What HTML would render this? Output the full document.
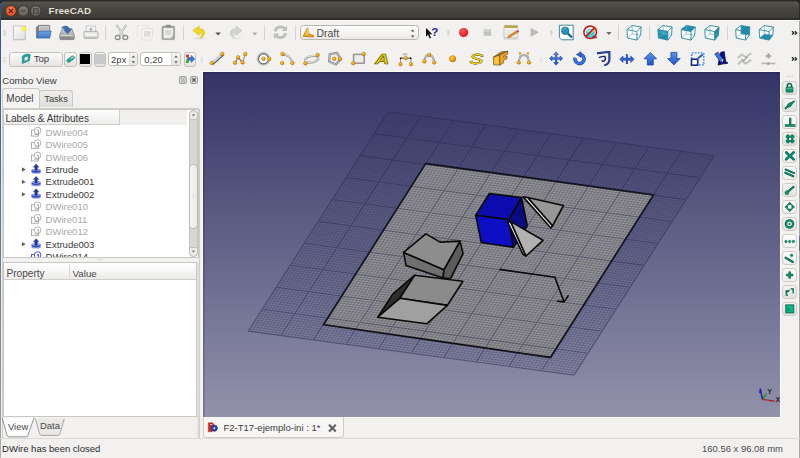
<!DOCTYPE html>
<html><head><meta charset="utf-8"><title>FreeCAD</title>
<style>
html,body{margin:0;padding:0;}
body{width:800px;height:458px;overflow:hidden;position:relative;background:#f2f1f0;font-family:"Liberation Sans",sans-serif;font-size:9.6px;color:#3c3c3c;}
.a{position:absolute;}
svg{position:absolute;overflow:visible;}
.t{position:absolute;white-space:nowrap;line-height:12px;}
.btn{position:absolute;border:1px solid #c2c0ba;border-radius:3px;background:linear-gradient(#fbfbfa,#e6e4e0);box-sizing:border-box;}
</style></head><body>

<!-- 3D view -->
<div class="a" style="left:202px;top:71px;width:579px;height:347px;background:#fbfbf9;"></div>
<div class="a" style="left:203px;top:72px;width:576.600px;height:345px;background:linear-gradient(#333366,#9292ab);overflow:hidden;box-shadow:inset 1.500px 1.500px 0 rgba(20,20,70,0.260);"></div>
<svg width="800" height="458" viewBox="0 0 800 458" style="left:0;top:0;">
<!-- gray base rect -->
<polygon points="425.7,163.6 653.5,194.9 550.5,357.5 323.6,324.6" fill="#949494" stroke="#0a0a0a" stroke-width="1.8" stroke-linejoin="miter"/>
<path d="M391.5 112.1L251.6 331.5M386.9 113.9L712.6 157.9M394.8 112.6L254.8 332.0M385.5 116.1L711.2 160.1M398.0 113.0L258.1 332.4M384.1 118.3L709.8 162.3M401.3 113.5L261.3 332.9M382.7 120.5L708.4 164.5M404.5 113.9L264.6 333.3M381.3 122.7L707.0 166.7M407.8 114.3L267.8 333.7M379.9 124.9L705.6 168.9M411.1 114.8L271.1 334.2M378.5 127.1L704.2 171.1M414.3 115.2L274.4 334.6M377.1 129.3L702.8 173.3M417.6 115.7L277.6 335.1M375.7 131.4L701.4 175.4M424.1 116.5L284.1 335.9M372.9 135.8L698.6 179.8M427.3 117.0L287.4 336.4M371.5 138.0L697.2 182.0M430.6 117.4L290.6 336.8M370.1 140.2L695.8 184.2M433.9 117.9L293.9 337.3M368.7 142.4L694.4 186.4M437.1 118.3L297.2 337.7M367.3 144.6L693.0 188.6M440.4 118.7L300.4 338.1M365.9 146.8L691.6 190.8M443.6 119.2L303.7 338.6M364.5 149.0L690.2 193.0M446.9 119.6L306.9 339.0M363.1 151.2L688.8 195.2M450.1 120.1L310.2 339.5M361.7 153.4L687.4 197.4M456.7 120.9L316.7 340.3M358.9 157.8L684.6 201.8M459.9 121.4L320.0 340.8M357.5 160.0L683.2 204.0M463.2 121.8L323.2 341.2M356.1 162.2L681.8 206.2M466.4 122.3L326.5 341.7M354.7 164.4L680.4 208.4M469.7 122.7L329.7 342.1M353.3 166.6L679.0 210.6M472.9 123.1L333.0 342.5M351.9 168.7L677.6 212.7M476.2 123.6L336.3 343.0M350.5 170.9L676.2 214.9M479.5 124.0L339.5 343.4M349.1 173.1L674.8 217.1M482.7 124.5L342.8 343.9M347.7 175.3L673.4 219.3M489.2 125.3L349.3 344.7M344.9 179.7L670.6 223.7M492.5 125.8L352.5 345.2M343.5 181.9L669.2 225.9M495.7 126.2L355.8 345.6M342.1 184.1L667.8 228.1M499.0 126.7L359.1 346.1M340.7 186.3L666.4 230.3M502.3 127.1L362.3 346.5M339.3 188.5L665.0 232.5M505.5 127.5L365.6 346.9M337.9 190.7L663.6 234.7M508.8 128.0L368.8 347.4M336.5 192.9L662.2 236.9M512.0 128.4L372.1 347.8M335.1 195.1L660.8 239.1M515.3 128.9L375.3 348.3M333.7 197.3L659.4 241.3M521.8 129.7L381.9 349.1M330.9 201.7L656.6 245.7M525.1 130.2L385.1 349.6M329.5 203.8L655.2 247.8M528.3 130.6L388.4 350.0M328.1 206.0L653.8 250.0M531.6 131.1L391.6 350.5M326.7 208.2L652.4 252.2M534.8 131.5L394.9 350.9M325.3 210.4L651.0 254.4M538.1 131.9L398.1 351.3M323.9 212.6L649.6 256.6M541.4 132.4L401.4 351.8M322.5 214.8L648.2 258.8M544.6 132.8L404.7 352.2M321.1 217.0L646.8 261.0M547.9 133.3L407.9 352.7M319.7 219.2L645.4 263.2M554.4 134.1L414.4 353.5M316.9 223.6L642.6 267.6M557.6 134.6L417.7 354.0M315.5 225.8L641.2 269.8M560.9 135.0L420.9 354.4M314.1 228.0L639.8 272.0M564.2 135.5L424.2 354.9M312.7 230.2L638.4 274.2M567.4 135.9L427.5 355.3M311.3 232.4L637.0 276.4M570.7 136.3L430.7 355.7M309.9 234.6L635.6 278.6M573.9 136.8L434.0 356.2M308.5 236.8L634.2 280.8M577.2 137.2L437.2 356.6M307.1 239.0L632.8 283.0M580.4 137.7L440.5 357.1M305.7 241.1L631.4 285.1M587.0 138.5L447.0 357.9M302.9 245.5L628.6 289.5M590.2 139.0L450.3 358.4M301.5 247.7L627.2 291.7M593.5 139.4L453.5 358.8M300.1 249.9L625.8 293.9M596.7 139.9L456.8 359.3M298.7 252.1L624.4 296.1M600.0 140.3L460.0 359.7M297.3 254.3L623.0 298.3M603.2 140.7L463.3 360.1M295.9 256.5L621.6 300.5M606.5 141.2L466.6 360.6M294.5 258.7L620.2 302.7M609.8 141.6L469.8 361.0M293.1 260.9L618.8 304.9M613.0 142.1L473.1 361.5M291.7 263.1L617.4 307.1M619.5 142.9L479.6 362.3M288.9 267.5L614.6 311.5M622.8 143.4L482.8 362.8M287.5 269.7L613.2 313.7M626.0 143.8L486.1 363.2M286.1 271.9L611.8 315.9M629.3 144.3L489.4 363.7M284.7 274.1L610.4 318.1M632.6 144.7L492.6 364.1M283.3 276.3L609.0 320.2M635.8 145.1L495.9 364.5M281.9 278.4L607.6 322.4M639.1 145.6L499.1 365.0M280.5 280.6L606.2 324.6M642.3 146.0L502.4 365.4M279.1 282.8L604.8 326.8M645.6 146.5L505.6 365.9M277.7 285.0L603.4 329.0M652.1 147.3L512.2 366.7M274.9 289.4L600.6 333.4M655.4 147.8L515.4 367.2M273.5 291.6L599.2 335.6M658.6 148.2L518.7 367.6M272.1 293.8L597.8 337.8M661.9 148.7L521.9 368.1M270.7 296.0L596.4 340.0M665.1 149.1L525.2 368.5M269.3 298.2L595.0 342.2M668.4 149.5L528.4 368.9M267.9 300.4L593.6 344.4M671.7 150.0L531.7 369.4M266.5 302.6L592.2 346.6M674.9 150.4L535.0 369.8M265.1 304.8L590.8 348.8M678.2 150.9L538.2 370.3M263.7 307.0L589.4 351.0M684.7 151.7L544.7 371.1M260.9 311.4L586.6 355.4M687.9 152.2L548.0 371.6M259.5 313.5L585.2 357.5M691.2 152.6L551.2 372.0M258.1 315.7L583.8 359.7M694.5 153.1L554.5 372.5M256.7 317.9L582.4 361.9M697.7 153.5L557.8 372.9M255.3 320.1L581.0 364.1M701.0 153.9L561.0 373.3M253.9 322.3L579.6 366.3M704.2 154.4L564.3 373.8M252.5 324.5L578.2 368.5M707.5 154.8L567.5 374.2M251.1 326.7L576.8 370.7M710.7 155.3L570.8 374.7M249.7 328.9L575.4 372.9" stroke="#34345a" stroke-opacity="0.34" stroke-width="0.8" fill="none"/>
<path d="M388.2 111.7L248.3 331.1M388.2 111.7L714.0 155.7M420.8 116.1L280.9 335.5M374.3 133.6L700.0 177.6M453.4 120.5L313.4 339.9M360.3 155.6L686.0 199.6M486.0 124.9L346.0 344.3M346.3 177.5L672.0 221.5M518.5 129.3L378.6 348.7M332.3 199.5L658.0 243.5M551.1 133.7L411.2 353.1M318.3 221.4L644.0 265.4M583.7 138.1L443.8 357.5M304.3 243.3L630.0 287.3M616.3 142.5L476.3 361.9M290.3 265.3L616.0 309.3M648.8 146.9L508.9 366.3M276.3 287.2L602.0 331.2M681.4 151.3L541.5 370.7M262.3 309.2L588.0 353.2M714.0 155.7L574.0 375.1M248.3 331.1L574.0 375.1" stroke="#26264e" stroke-opacity="0.5" stroke-width="1.1" fill="none"/>
<g stroke="#0a0a0a" stroke-width="1.6" stroke-linejoin="round">
<!-- cube -->
<polygon points="508.6,219.8 521.5,197.5 527.3,225.8 513.3,247.3" fill="#0a0a82"/>
<polygon points="489.3,193.6 521.5,197.5 508.6,219.8 475.7,215.3" fill="#0c0cae"/>
<polygon points="475.7,215.3 508.6,219.8 513.3,247.3 481.3,242.5" fill="#0e0ec4"/>
<!-- triangle 1 -->
<polygon points="523.2,196.9 527.8,197.5 552.6,225.8 550.8,228" fill="#e4e4e4"/>
<polygon points="527.8,197.5 563.4,205.5 552.6,225.8" fill="#979797"/>
<!-- triangle 2 -->
<polygon points="507.5,222 510.7,221.6 526,256 522.9,254.2" fill="#e4e4e4"/>
<polygon points="510.7,221.6 543,240.3 526,256" fill="#b2b2b2"/>
<!-- object 1 -->
<polygon points="403.6,252.4 443.9,269.7 443.2,278.1 406,265.6" fill="#6f6f6f"/>
<polygon points="460,241.1 463.1,253.6 450.4,278.8 443.2,278.1 443.9,269.7" fill="#5c5c5c"/>
<polygon points="403.6,252.4 425.9,233.9 440.1,242.1 460,241.1 443.9,269.7" fill="#8d8d8d"/>
<!-- object 2 -->
<polygon points="414.7,275.2 399.8,298.3 377.8,317.2 392.7,294.1" fill="#2e2e2e"/>
<polygon points="414.7,275.2 462.9,281.3 447.3,305.4 399.8,298.3" fill="#8b8b8b"/>
<polygon points="399.8,298.3 447.3,305.4 426.7,323.8 377.8,317.2" fill="#a0a0a0"/>
<!-- wire -->
<polyline points="499.4,269.4 554.9,277.3 564,301.9" fill="none"/>
<polyline points="556.8,301.1 564,301.9 568.6,295.3" fill="none"/>
</g>
</svg>

<!-- titlebar -->
<div class="a" style="left:0;top:0;width:800px;height:19.500px;background:linear-gradient(#2b2a27 0,#2b2a27 1px,#57554d 2px,#4a4942 7px,#3d3c37 17.500px,#2f2e2b 18.500px,#2f2e2b 19.500px);"></div>
<div class="a" style="left:799px;top:0;width:1px;height:19.500px;background:#2a2927;"></div>
<div class="a" style="left:797px;top:0;width:3px;height:2.500px;background:#262523;border-radius:0 0 0 3px;"></div>
<div class="a" style="left:0;top:19.500px;width:800px;height:1.500px;background:#fdfdfc;"></div>
<div class="a" style="left:0;top:1px;width:1px;height:457px;background:linear-gradient(#2e5590 0,#355c90 60px,#4a6d92 150px,#6d8298 290px,#9a9a9a 420px,#b4b4b4 457px);"></div>
<div class="a" style="left:0;top:0;width:2px;height:3px;background:#1b2747;"></div>
<svg width="60" height="20" viewBox="0 0 60 20" style="left:0;top:0;">
<defs>
<radialGradient id="cg" cx="0.5" cy="0.3" r="0.7"><stop offset="0" stop-color="#f7744a"/><stop offset="1" stop-color="#e8501f"/></radialGradient>
<linearGradient id="mg" x1="0" y1="0" x2="0" y2="1"><stop offset="0" stop-color="#7d7b73"/><stop offset="1" stop-color="#66645d"/></linearGradient>
</defs>
<circle cx="10.9" cy="10.9" r="5.4" fill="url(#cg)" stroke="#33302a" stroke-width="0.9"/>
<path d="M8.8 8.8l4.2 4.2M13 8.8l-4.2 4.2" stroke="#5e2410" stroke-width="1.2" fill="none"/>
<circle cx="23.3" cy="10.9" r="5.3" fill="url(#mg)" stroke="#33312d" stroke-width="0.9"/>
<path d="M20.9 10.9h4.8" stroke="#45433e" stroke-width="1.2"/>
<circle cx="35.8" cy="10.9" r="5.3" fill="url(#mg)" stroke="#33312d" stroke-width="0.9"/>
<rect x="33.6" y="8.7" width="4.4" height="4.4" fill="none" stroke="#45433e" stroke-width="1.1"/>
</svg>
<div class="t" style="left:48.600px;top:5.300px;font-weight:bold;font-size:9.900px;color:#e6e2d9;letter-spacing:0.050px;text-shadow:0 -0.5px 0 #222;">FreeCAD</div>

<div class="a" style="left:798px;top:21px;width:2px;height:437px;background:linear-gradient(90deg,#f7f7f6 0,#f7f7f6 1.250px,#a6a6a6 1.400px,#a6a6a6 2px);"></div>

<!-- toolbar1 -->
<div class="a" style="left:299.5px;top:25px;width:119px;height:15px;border:1px solid #b9b7b1;border-radius:3.5px;background:linear-gradient(#ffffff,#f3f2f0 60%,#e9e8e5);box-sizing:border-box;"></div>
<div class="t" style="left:316.5px;top:27.50px;font-size:10.4px;color:#4c4c4c;">Draft</div>
<svg width="800" height="50" viewBox="0 0 800 50" style="left:0;top:0;">
<defs>
<linearGradient id="pg" x1="0" y1="0" x2="1" y2="1"><stop offset="0" stop-color="#ffffff"/><stop offset="1" stop-color="#dedede"/></linearGradient>
<linearGradient id="fb" x1="0" y1="0" x2="0" y2="1"><stop offset="0" stop-color="#6fa3e0"/><stop offset="1" stop-color="#3d78c4"/></linearGradient>
<linearGradient id="dg" x1="0" y1="0" x2="0" y2="1"><stop offset="0" stop-color="#d4d4d4"/><stop offset="1" stop-color="#8c8c8c"/></linearGradient>
<radialGradient id="rg" cx="0.4" cy="0.35" r="0.7"><stop offset="0" stop-color="#ff5a5a"/><stop offset="1" stop-color="#dc1414"/></radialGradient>
<radialGradient id="yg" cx="0.5" cy="0.5" r="0.5"><stop offset="0" stop-color="#ffffa0"/><stop offset="0.6" stop-color="#f4ee30"/><stop offset="1" stop-color="#f0e840" stop-opacity="0.6"/></radialGradient>
<path id="hull" d="M0.400 4.500L5.600 0.400L14.600 1.900L14 10.100L10.300 15L0.900 12.900Z" fill="#fcfdfd"/>
<g id="cube" fill="none" stroke="#2a86a2" stroke-width="0.9" stroke-linejoin="round">
<path d="M5.6 8.8L0.9 12.9M5.6 8.8V0.4M5.6 8.8L14 10.1" stroke="#6fb3c6" stroke-width="0.7"/>
<path d="M0.4 4.5L10.3 6.4V15L0.9 12.9ZM0.4 4.5L5.6 0.4L14.6 1.9L10.3 6.4M14.6 1.9L14 10.1L10.3 15"/>
</g>
</defs>
<!-- handles -->
<g fill="#d9d7d3"><rect x="3.5" y="30" width="2.2" height="6"/><rect x="447.3" y="30" width="2.4" height="5.4"/><rect x="550" y="30" width="2.4" height="5.4"/></g>
<!-- separators -->
<g stroke="#d6d4d0" stroke-width="1"><path d="M105.5 25v15M183.5 25v15M264.5 25v15M295.5 25v15M618.5 25v15M649.5 25v15M727.5 25v15"/></g>
<!-- new -->
<rect x="13.6" y="26" width="11.6" height="13.4" fill="url(#pg)" stroke="#b4b4b2" stroke-width="0.8"/>
<path d="M13.4 39.9h12.2" stroke="#c8c8c6" stroke-width="0.8"/>
<circle cx="24" cy="28.7" r="2.7" fill="url(#yg)"/>
<!-- open -->
<path d="M36.200 27.600l2.200-2.300h11.400v6.200l-11.400 6.300h-2z" fill="#7e7e7c" stroke="#6a6a68" stroke-width="0.500" stroke-linejoin="round"/>
<path d="M39 26.100h10.200v5.600h-10.200z" fill="#d4d4d2"/>
<path d="M40 27.200h8.600v4.500h-8.600z" fill="#bcbcba"/>
<path d="M38.400 31.300l12.700-0.300l-1.400 7.100h-12.800z" fill="url(#fb)" stroke="#2f66ae" stroke-width="0.700" stroke-linejoin="round"/>
<!-- save -->
<path d="M59.8 35.2l2.6-6.6h9.4l2.4 6.6v3.6q0 0.8-0.8 0.8H60.600q-0.800 0-0.800-0.800z" fill="url(#dg)" stroke="#7c7c7a" stroke-width="0.8" stroke-linejoin="round"/>
<path d="M60.4 35.4h13.200" stroke="#e8e8e8" stroke-width="0.8"/>
<path d="M61.5 38h9" stroke="#6e6e6e" stroke-width="0.7"/>
<path d="M61.6 27.600q3.600-3 6.600-0.600q1 1 1.200 2.400h2l-4 4.400l-3.600-4.400h2q-0.600-2.600-4.200-1.800z" fill="#3a6fb8" stroke="#2a5596" stroke-width="0.6" stroke-linejoin="round"/>
<!-- print -->
<path d="M86.200 26h9.400v5.800h-9.400z" fill="#f4f4f4" stroke="#b8b8b6" stroke-width="0.7"/>
<path d="M90.900 27.400l2 2h-1.300v1.600h-1.400v-1.600h-1.300z" fill="#a6a6a4"/>
<path d="M83.800 32.400q0-1 1-1h12.200q1 0 1 1v5q0 1-1 1H84.800q-1 0-1-1z" fill="#e2e2e0" stroke="#a8a8a6" stroke-width="0.8"/>
<path d="M85 34.600h11.800" stroke="#fafafa" stroke-width="1.4"/>
<path d="M84.400 37.400h13" stroke="#b4b4b2" stroke-width="0.8"/>
<!-- cut -->
<g fill="none" stroke-linecap="round">
<path d="M117 25.600l6.800 10.400M125.800 25.600l-6.800 10.400" stroke-width="2.200" stroke="#b2b2b0"/>
<path d="M117 25.600l6.800 10.400M125.800 25.600l-6.800 10.400" stroke-width="1.200" stroke="#dcdcda"/>
<ellipse cx="117.700" cy="37.500" rx="2.400" ry="2.100" stroke-width="1.300" stroke="#8c8c8a"/>
<ellipse cx="125.300" cy="37.500" rx="2.400" ry="2.100" stroke-width="1.300" stroke="#8c8c8a"/>
</g>
<!-- copy (disabled) -->
<g opacity="0.55">
<rect x="137.600" y="25.400" width="10.200" height="11.600" fill="#f4f4f3" stroke="#d4d4d2" stroke-width="0.7"/>
<path d="M142 28.800h10.400v8.400l-2.800 2.800h-7.600z" fill="#fafaf9" stroke="#c8c8c6" stroke-width="0.7"/>
<rect x="144" y="31" width="6.400" height="5.600" fill="#d0d0ce"/>
</g>
<!-- paste -->
<rect x="162" y="26.200" width="12.600" height="13.400" rx="0.800" fill="#a4a4a2" stroke="#929290" stroke-width="0.600"/>
<rect x="165.600" y="24.800" width="5.400" height="2.600" rx="1" fill="#8e8e8c"/>
<path d="M163.500 28h9.600v8l-2.200 2.200h-7.400z" fill="#ededeb"/>
<path d="M173.100 36l-2.200 2.200v-2.200z" fill="#c4c4c2"/>
<rect x="165.400" y="30" width="5.800" height="5" fill="#d8d8d6"/>
<!-- undo -->
<ellipse cx="199.500" cy="38.300" rx="5" ry="0.900" fill="#c8c6c0" opacity="0.6"/>
<path d="M192.900 30.400l6.300-4.600v2.900q5.400 0.200 5.600 4.400q0 3.400-4.600 4.800q2.200-2 1.600-3.700q-0.600-1.400-2.600-1.400v2.700z" fill="#f2d624" stroke="#d8b810" stroke-width="0.6" stroke-linejoin="round"/>
<path d="M215.400 32.400h5.400l-2.700 3z" fill="#4e4e4c"/>
<!-- redo (disabled) -->
<g opacity="0.5">
<ellipse cx="236.500" cy="38.300" rx="5" ry="0.900" fill="#c8c6c0" opacity="0.6"/>
<path d="M242.100 30.400l-6.300-4.600v2.900q-5.400 0.200-5.600 4.400q0 3.400 4.600 4.800q-2.200-2-1.600-3.700q0.600-1.400 2.600-1.400v2.700z" fill="#b4b4b2" stroke="#a0a09e" stroke-width="0.6" stroke-linejoin="round"/>
<path d="M252.200 32.400h5.200l-2.600 3z" fill="#6e6e6c"/>
</g>
<!-- refresh (disabled) -->
<g fill="none" stroke="#bdbdbb" stroke-width="2.800">
<path d="M275.200 31.400q0.600-4.400 5.200-4.600q2.600 0 4.200 1.800"/>
<path d="M285.600 33q-0.600 4.400-5.200 4.600q-2.600 0-4.200-1.800"/>
</g>
<path d="M287 25.400v5.600h-5.600zM273.800 39v-5.600h5.600z" fill="#bdbdbb"/>
<!-- draft icon -->
<path d="M305.600 28.600h7.800v8.600h-7.800z" fill="#fbfbfb" stroke="#d4d4d2" stroke-width="0.5"/>
<path d="M303 36.400l4.600-8.600l1.500 6l4.400 1.600l0.200 1.600z" fill="#e8a417" stroke="#a96a06" stroke-width="0.6" stroke-linejoin="round"/>
<path d="M307.600 27.800l1.500 6l-4 1.800z" fill="#f7cc4a"/>
<!-- combo arrows -->
<path d="M410.700 31.600l1.900-2.200l1.900 2.200zM410.700 35.400l1.900 2.200l1.900-2.200z" fill="#4a4a48"/>
<!-- whats this -->
<path d="M426 27.900v8.800l2.100-1.900l1.500 3.600l1.400-0.600l-1.500-3.500h2.800z" fill="#0a0a0a"/>
<text x="431.300" y="36.200" font-family="Liberation Sans, sans-serif" font-weight="bold" font-size="11.500" fill="#1c1c9c">?</text>
<!-- record -->
<circle cx="463.600" cy="32.500" r="4.600" fill="url(#rg)"/>
<!-- stop -->
<rect x="483.800" y="29" width="7.300" height="6.800" fill="#c2c2c0"/>
<rect x="483.800" y="29" width="7.300" height="2.600" fill="#d2d2d0"/>
<!-- macro edit -->
<rect x="504" y="25.400" width="13.800" height="13.600" rx="1" fill="#f2f2f0" stroke="#b6b6b2" stroke-width="0.7"/>
<rect x="504.300" y="25.500" width="13.200" height="2.400" fill="#b3a548"/>
<path d="M506 30.800h9.800M506 33h5M506 35.200h3.600" stroke="#cfcfcd" stroke-width="0.7"/>
<path d="M504 37.700h13.800" stroke="#c6c6c2" stroke-width="1"/>
<path d="M508.600 35.800l8.200-5l1 1.600l-8.200 5l-2 0.300z" fill="#e8902a" stroke="#a85e10" stroke-width="0.500"/>
<path d="M516.800 30.800l1.200-0.700l1 1.600l-1.200 0.700z" fill="#d42020"/>
<!-- play -->
<path d="M530.600 27.800l8.400 4.500l-8.400 4.500z" fill="#b9b9b7"/>
<!-- zoom fit -->
<path d="M559.400 25.200h13.800v14.600h-11.600l-2.200-2.200z" fill="#fdfdfd" stroke="#2f7a94" stroke-width="0.9" stroke-linejoin="round"/>
<path d="M568.200 33.800l3.200 3" stroke="#1d6f8c" stroke-width="2.400" stroke-linecap="round"/>
<circle cx="565.200" cy="30.800" r="3.700" fill="#2697ba" stroke="#176a86" stroke-width="0.800"/>
<path d="M563 29.600q1-1.800 3-1.600" stroke="#7fd0e6" stroke-width="0.800" fill="none"/>
<!-- no draw -->
<path d="M586.600 31q0-1.400 3.800-1.400q3.800 0 3.800 1.400v5q0 1.400-3.800 1.400q-3.800 0-3.800-1.400z" fill="#3fd0da" stroke="#1a9aa6" stroke-width="0.500"/>
<ellipse cx="590.400" cy="31" rx="3.800" ry="1.300" fill="#8ceef2"/>
<path d="M589.600 32.600l6-5.400l1 1l-6 5.400z" fill="#f2d24a" stroke="#b0902a" stroke-width="0.300"/>
<ellipse cx="594.600" cy="37.300" rx="2.600" ry="1.200" fill="#5a1010" opacity="0.700"/>
<circle cx="590.200" cy="32.300" r="6.300" fill="none" stroke="#c81414" stroke-width="1.500"/>
<path d="M585.800 36.800l8.800-9" stroke="#c81414" stroke-width="1.600"/>
<path d="M606.200 32h5.400l-2.700 3z" fill="#6a6a68"/>
<!-- cubes -->
<use href="#hull" x="626.600" y="25.100"/><use href="#cube" x="626.600" y="25.100"/>
<g transform="translate(657.500 25.100)"><use href="#hull"/><path d="M0.400 4.500L10.300 6.400V15L0.900 12.900Z" fill="#1f8cab"/><path d="M0.400 4.500L10.300 6.400V10L0.600 8z" fill="#3aa6c2" opacity="0.6"/><use href="#cube"/></g>
<g transform="translate(680.700 25.100)"><use href="#hull"/><path d="M0.400 4.500L5.600 0.400L14.600 1.900L10.300 6.400Z" fill="#1f8cab"/><use href="#cube"/></g>
<g transform="translate(704.400 25.100)"><use href="#hull"/><path d="M10.300 6.400L14.600 1.900L14 10.100L10.300 15Z" fill="#1f8cab"/><use href="#cube"/></g>
<g transform="translate(735.300 25.100)"><use href="#hull"/><path d="M5.600 0.400L14.600 1.900L14 10.100L5.600 8.800Z" fill="#1f8cab"/><use href="#cube"/></g>
<g transform="translate(758.800 25.100)"><use href="#hull"/><path d="M0.900 12.900L5.600 8.800L14 10.100L10.300 15Z" fill="#1f8cab"/><use href="#cube"/></g>
<!-- chevrons -->
<path d="M792 31.200l1.800 1.700l-1.800 1.700M794.800 31.200l1.800 1.700l-1.800 1.700" fill="none" stroke="#1e1e1c" stroke-width="1.300"/>
</svg>

<!-- toolbar2 -->
<div class="btn" style="left:9px;top:51.5px;width:53.5px;height:15px;"></div>
<div class="btn" style="left:64.300px;top:51.5px;width:12.800px;height:15px;"></div>
<div class="btn" style="left:78.700px;top:51.5px;width:13.200px;height:15px;"></div>
<div class="btn" style="left:93.500px;top:51.5px;width:12.600px;height:15px;"></div>
<div class="btn" style="left:183.600px;top:51.5px;width:12.200px;height:15px;"></div>
<div class="a" style="left:80.200px;top:54px;width:10.200px;height:10px;background:#000;"></div>
<div class="a" style="left:95px;top:54px;width:9.600px;height:10px;background:#c9c9c8;"></div>
<!-- spin boxes -->
<div class="a" style="left:108px;top:52px;width:30.400px;height:14px;border:1px solid #c2c0ba;border-radius:3px;background:#fff;box-sizing:border-box;overflow:hidden;"><div class="a" style="left:20px;top:0;width:10px;height:14px;background:linear-gradient(#f6f5f3,#e4e2de);border-left:1px solid #dcdad6;"></div></div>
<div class="a" style="left:140.300px;top:52px;width:41px;height:14px;border:1px solid #c2c0ba;border-radius:3px;background:#fff;box-sizing:border-box;overflow:hidden;"><div class="a" style="left:30px;top:0;width:11px;height:14px;background:linear-gradient(#f6f5f3,#e4e2de);border-left:1px solid #dcdad6;"></div></div>
<div class="t" style="left:33.800px;top:53.300px;font-size:9.600px;letter-spacing:-0.100px;color:#3c3c3c;">Top</div>
<div class="t" style="left:111px;top:53.900px;font-size:9.300px;letter-spacing:0.200px;color:#3c3c3c;">2px</div>
<div class="t" style="left:144.200px;top:53.900px;font-size:9.300px;letter-spacing:0.150px;color:#3c3c3c;">0,20</div>
<svg width="800" height="30" viewBox="0 46 800 30" style="left:0;top:46px;">
<defs>
<radialGradient id="og" cx="0.4" cy="0.35" r="0.65"><stop offset="0" stop-color="#ffd060"/><stop offset="0.5" stop-color="#f5a80c"/><stop offset="1" stop-color="#c87a00"/></radialGradient>
<linearGradient id="bl" x1="0" y1="0" x2="0" y2="1"><stop offset="0" stop-color="#5a98f4"/><stop offset="1" stop-color="#1c54c8"/></linearGradient>
<linearGradient id="gy" x1="0" y1="0" x2="1" y2="1"><stop offset="0" stop-color="#d8d8d8"/><stop offset="1" stop-color="#9a9a9a"/></linearGradient>
<g id="dot"><circle r="1.850" fill="url(#og)" stroke="#a86400" stroke-width="0.350"/></g>
</defs>
<!-- handles -->
<g stroke="#d6d4d0" stroke-width="0.7"><path d="M3 57.500h3M3 59h3M3 60.500h3M3 62h3M200.500 57.500h2.400M200.500 59h2.400M200.500 60.500h2.400M200.500 62h2.400M539.800 57.500h2.400M539.800 59h2.400M539.800 60.500h2.400M539.800 62h2.400"/></g>
<!-- top view icon -->
<path d="M22.300 56l3.800-2l4.200 0.600l-0.800 6l-7.200 3zM24.200 57.300l0 4.100l3.900-1.700l0.100-3.700z" fill="#1fa3ab" fill-rule="evenodd" stroke="#16747c" stroke-width="0.500" stroke-linejoin="round"/>
<path d="M27.900 62.200l1.400 1.300" stroke="#5a8a90" stroke-width="0.600"/>
<!-- link icon -->
<path d="M67.400 59.600l4-3.200q1.600-1 2.800 0q1 1.200-0.200 2.400l-4 3q-1.600 1-2.800 0q-1-1.200 0.200-2.200z" fill="#2aa492" stroke="#127866" stroke-width="0.600"/>
<path d="M70.600 58.600l3.400-2" stroke="#d8f4ee" stroke-width="0.900"/>
<!-- spin arrows -->
<path d="M131.600 57.400l1.800-2l1.800 2zM131.600 61.200l1.800 2l1.800-2zM174.200 57.400l1.800-2l1.800 2zM174.200 61.200l1.800 2l1.800-2z" fill="#5a5a58"/>
<!-- apply icon -->
<rect x="185.900" y="54.600" width="3" height="2.800" fill="#e02a1a"/><rect x="185.900" y="57.400" width="3" height="2.800" fill="#f0d020"/><rect x="185.900" y="60.200" width="3" height="2.800" fill="#34b434"/>
<path d="M187.600 57.600h3.600v-2.200l3.600 3.500l-3.600 3.500v-2.200h-3.600z" fill="#3a78e0" stroke="#1a3c98" stroke-width="0.500"/>
<!-- line -->
<path d="M213.400 64l10-9.100" stroke="#5c5c5c" stroke-width="1.300" stroke-linecap="round"/><path d="M211.900 62.900l10.300-9.200" stroke="#d2d2d2" stroke-width="2.300" stroke-linecap="round"/>
<use href="#dot" x="211.800" y="63"/><use href="#dot" x="222.300" y="53.900"/>
<!-- wire -->
<path d="M235.100 62.700l3-5.400l4.400 5.100l2.800-8.500" fill="none" stroke="#6c6c6c" stroke-width="1.100" stroke-linejoin="round"/>
<path d="M234.700 62.400l3-5.400M242.100 62.100l2.800-8.500" fill="none" stroke="#d8d8d8" stroke-width="0.800"/>
<use href="#dot" x="235.100" y="62.700"/><use href="#dot" x="238.100" y="57.300"/><use href="#dot" x="242.500" y="62.400"/><use href="#dot" x="245.300" y="53.900"/>
<!-- circle -->
<circle cx="263.500" cy="58.800" r="6" fill="none" stroke="#c6c6c6" stroke-width="1.900"/><circle cx="263.500" cy="58.900" r="5" fill="#fafafa" stroke="#6c6c6c" stroke-width="1.100"/>
<use href="#dot" x="263.500" y="58.700"/><use href="#dot" x="269.300" y="58.800"/>
<!-- arc -->
<path d="M283 55q7.600 1 9 8" fill="none" stroke="#6a6a6a" stroke-width="1.200"/><path d="M282.400 53.900q8.400 0.600 10.200 9.100" fill="none" stroke="#cccccc" stroke-width="2.300"/>
<use href="#dot" x="282.400" y="53.900"/><use href="#dot" x="282.200" y="63"/><use href="#dot" x="292.400" y="63"/>
<!-- ellipse -->
<ellipse cx="311.700" cy="59.200" rx="6.800" ry="3.200" transform="rotate(-11 311.700 59.200)" fill="none" stroke="#a2a2a2" stroke-width="2.200"/><ellipse cx="311.700" cy="58.900" rx="6.800" ry="3.200" transform="rotate(-11 311.700 58.900)" fill="none" stroke="#e4e4e4" stroke-width="1.100"/>
<use href="#dot" x="305.400" y="63.300"/><use href="#dot" x="317.600" y="54.900"/>
<!-- polygon -->
<path d="M329.800 54.200l7.200-1.300l3.800 6.200l-4.900 5.400l-6.800-3z" fill="#f0f0f0" stroke="#8c8c8c" stroke-width="2.300" stroke-linejoin="round"/>
<path d="M329.800 54.200l7.200-1.300l3.800 6.200l-4.900 5.400l-6.800-3z" fill="none" stroke="#c4c4c4" stroke-width="0.900" stroke-linejoin="round"/>
<use href="#dot" x="334.200" y="58.700"/><use href="#dot" x="339.900" y="58.900"/>
<!-- rectangle -->
<rect x="353.600" y="54.400" width="10.600" height="8.800" fill="#ececec" stroke="#9a9a9a" stroke-width="1.600"/>
<use href="#dot" x="353.200" y="63.200"/><use href="#dot" x="363.700" y="53.900"/>
<!-- text A -->
<text x="375" y="64.400" font-family="Liberation Sans, sans-serif" font-weight="bold" font-style="italic" font-size="15.500" fill="#f4dc08" stroke="#6a5c00" stroke-width="0.700" textLength="14.200" lengthAdjust="spacingAndGlyphs">A</text>
<!-- dimension -->
<path d="M400.500 58v6M411 58v6" stroke="#555" stroke-width="0.600"/>
<path d="M400.500 58.200h10.500" stroke="#333" stroke-width="0.800"/>
<path d="M399.600 58.200l1.800-1.200v2.400zM411.900 58.200l-1.800-1.200v2.400z" fill="#111"/>
<path d="M402.600 55.400l0.800-2l0.800 2l0.800-2.400l0.800 2.400l0.800-2l0.800 2" fill="none" stroke="#9a9a9a" stroke-width="0.500"/>
<use href="#dot" x="400.500" y="64.100"/><use href="#dot" x="411" y="64.100"/><use href="#dot" x="405.500" y="58.100"/>
<!-- bspline -->
<path d="M424.300 61.400q0.800-6.500 4.800-6.500q4 0 5.100 7.600" fill="none" stroke="#9a9a9a" stroke-width="2.200"/><path d="M424.300 61.200q0.800-6.500 4.800-6.500q4 0 5.100 7.600" fill="none" stroke="#d0d0d0" stroke-width="0.900"/>
<use href="#dot" x="424.300" y="61.400"/><use href="#dot" x="429.100" y="54.900"/><use href="#dot" x="434.200" y="62.500"/>
<!-- point -->
<circle cx="452.600" cy="58.800" r="3.300" fill="url(#og)" stroke="#b06c00" stroke-width="0.300"/>
<!-- shapestring S -->
<text x="469.400" y="64.300" font-family="Liberation Sans, sans-serif" font-style="italic" font-size="15" fill="#f0d808" stroke="#4c4200" stroke-width="0.800" paint-order="stroke" textLength="13.600" lengthAdjust="spacingAndGlyphs">S</text>
<!-- facebinder -->
<g stroke="#4e4220" stroke-width="0.600" stroke-linejoin="round">
<path d="M493.300 57.200l8.200-5.500l6.200-0.400l-7.800 3.600z" fill="#c88c10"/>
<path d="M493.300 57.200l6.600-2.300v10.200l-6.300-0.300z" fill="#fdbe3a"/>
<path d="M499.900 54.900l7.800-3.600v2.800l-4.100 1.800v1.400l3.400-1.400v2.800l-3.400 1.400v2.700l-3.700 2.300z" fill="#f8a818"/>
</g>
<!-- bezier -->
<path d="M518.700 62.500l1.300-9.300M529 62.500l-1.100-9.300" stroke="#9c9c9c" stroke-width="0.500"/>
<path d="M518.700 62.500c1-10 9.300-10 10.300 0" fill="none" stroke="#9a9a9a" stroke-width="2"/><path d="M518.700 62.300c1-10 9.300-10 10.300 0" fill="none" stroke="#cfcfcf" stroke-width="0.800"/>
<circle cx="520" cy="53.200" r="1.200" fill="#f0a010"/><circle cx="527.900" cy="53.200" r="1.200" fill="#f0a010"/>
<use href="#dot" x="518.700" y="62.500"/><use href="#dot" x="529" y="62.500"/>
<!-- move -->
<path d="M556.10 51.80L558.50 54.50L556.95 54.50L556.95 57.65L560.10 57.65L560.10 56.10L562.80 58.50L560.10 60.90L560.10 59.35L556.95 59.35L556.95 62.50L558.50 62.50L556.10 65.20L553.70 62.50L555.25 62.50L555.25 59.35L552.10 59.35L552.10 60.90L549.40 58.50L552.10 56.10L552.10 57.65L555.25 57.65L555.25 54.50L553.70 54.50Z" fill="url(#bl)" stroke="#1a3a8c" stroke-width="0.550" stroke-linejoin="round"/>
<!-- rotate -->
<path d="M579.800 54.400a4.600 4.600 0 1 1 -4.700 3.400" fill="none" stroke="#163a94" stroke-width="3.400"/>
<path d="M579.800 54.400a4.600 4.600 0 1 1 -4.700 3.400" fill="none" stroke="#3674e4" stroke-width="2.200"/>
<path d="M576.400 54.600l4.600-3v5.800z" fill="#2c64d8" stroke="#163a94" stroke-width="0.500"/>
<!-- offset -->
<path d="M597 53.400q6-1.200 12.400-1.400v8q-0.400 4-5 5.200" fill="none" stroke="#14247c" stroke-width="2.100" stroke-linejoin="round"/>
<path d="M597 53.400q6-1.200 12.400-1.400v8q-0.400 4-5 5.200" fill="none" stroke="#3858c0" stroke-width="0.800" stroke-linejoin="round"/>
<path d="M598.800 57.600q3.500-1.400 6-1.200q1.600 2.400-0.400 4.400q-2 1.200-2.600-0.600" fill="none" stroke="#14247c" stroke-width="1.500"/>
<!-- trimex -->
<path d="M619.600 59.200l3.400-3.300v2.200h2.800v2.200h-2.800v2.200zM634.200 59.200l-3.400-3.300v2.200h-2.800v2.200h2.800v2.200z" fill="#2c64d8" stroke="#163a94" stroke-width="0.500" stroke-linejoin="round"/>
<rect x="626.100" y="54.600" width="1.700" height="9.300" fill="#2458cc" stroke="#163a94" stroke-width="0.400"/>
<!-- upgrade -->
<path d="M650.300 52.400l6.300 6.400h-3.300v6.200h-6v-6.200h-3.300z" fill="url(#bl)" stroke="#163a94" stroke-width="0.700" stroke-linejoin="round"/>
<!-- downgrade -->
<path d="M673.900 65l6.300-6.400h-3.300v-6.200h-6v6.200h-3.300z" fill="url(#bl)" stroke="#163a94" stroke-width="0.700" stroke-linejoin="round"/>
<!-- scale -->
<rect x="691.800" y="52.900" width="12" height="12" fill="none" stroke="#3a8af4" stroke-width="1.400" stroke-dasharray="1.800 1.200"/>
<rect x="691.500" y="59.200" width="6.200" height="6" fill="#fff" stroke="#142c84" stroke-width="1.600"/>
<path d="M698.600 57.800l3.600-2.800" stroke="#2458c4" stroke-width="2" stroke-linecap="round"/>
<!-- drawing -->
<path d="M720.600 52.400l3.600-0.800l1.400 9.600l2.400 2l-5.400 0.800l-4.600 1z" fill="#0c0c98" stroke="#050520" stroke-width="0.700" stroke-linejoin="round"/>
<path d="M714.800 54l3-2l5.800 7.800l-0.800 2.400l-2.400-0.200z" fill="#3c7cdc" stroke="#0a1030" stroke-width="0.600" stroke-linejoin="round"/>
<path d="M722.800 62.200l-1.200-2.200l1.800-1.200z" fill="#f0f0f0"/>
<!-- edit (disabled) -->
<g fill="none" stroke="#bdbdbb" stroke-width="1.800" stroke-linejoin="round"><path d="M738 57.800l4-3.400l3.600 3l5.600-4.200"/><path d="M738 64.200l4-3.400l3.600 3l5.600-4.200"/></g>
<path d="M741.600 58.800l2 2l4-4.200" fill="none" stroke="#9c9c9a" stroke-width="1.200"/>
<!-- wire2bspline (disabled) -->
<path d="M768.500 53.200v5.400M765.800 55.900h5.400" stroke="#a8a8a6" stroke-width="2"/>
<path d="M761.400 63.400h14" stroke="#b8b8b6" stroke-width="1.600"/><circle cx="768.400" cy="63.400" r="1.500" fill="#a2a2a0"/>
<!-- chevrons -->
<path d="M792 57.200l1.800 1.700l-1.800 1.700M794.800 57.200l1.800 1.700l-1.800 1.700" fill="none" stroke="#1e1e1c" stroke-width="1.300"/>
</svg>

<!-- left panel -->
<div class="t" style="left:2.300px;top:74.50px;font-size:9.650px;color:#3c3c3c;">Combo View</div>
<!-- float / close buttons -->
<svg width="30" height="12" viewBox="176 74 30 12" style="left:176px;top:74px;">
<rect x="178.500" y="75.700" width="8.400" height="8.600" rx="2" fill="#fbfbfa"/>
<rect x="189.800" y="75.700" width="8.400" height="8.600" rx="2" fill="#fbfbfa"/>
<rect x="179.400" y="76.600" width="6.800" height="6.800" rx="1.400" fill="#d9d8d6" stroke="#a3a2a0" stroke-width="1.100"/>
<path d="M181.300 81.500l3-3M181.300 79.300v-0.900h0.900M184.300 80.700v0.900h-0.900" fill="none" stroke="#8a8987" stroke-width="0.900"/>
<rect x="190.600" y="76.600" width="6.800" height="6.800" rx="1.400" fill="#dedddb" stroke="#a3a2a0" stroke-width="1.100"/>
<path d="M192.400 78.400l3.200 3.200M195.600 78.400l-3.200 3.200" stroke="#4a4a48" stroke-width="1.200"/>
</svg>
<!-- tab pane -->
<div class="a" style="left:1.500px;top:107.500px;width:198.500px;height:331px;border:1px solid #cfcdc8;border-radius:0 2px 2px 2px;box-sizing:border-box;background:#f2f1f0;"></div>
<div class="a" style="left:39.400px;top:90.300px;width:33.200px;height:17.200px;border:1px solid #cbc9c3;border-bottom:none;border-radius:3px 3px 0 0;box-sizing:border-box;background:linear-gradient(#efeeec,#e0deda);"></div>
<div class="a" style="left:1.500px;top:88.300px;width:38px;height:20.200px;border:1px solid #cbc9c3;border-bottom:none;border-radius:3.500px 3.500px 0 0;box-sizing:border-box;background:#f5f4f3;"></div>
<div class="t" style="left:6.300px;top:92.60px;font-size:10px;color:#3c3c3c;">Model</div>
<div class="t" style="left:44.300px;top:93.40px;font-size:9.200px;color:#3c3c3c;">Tasks</div>
<!-- tree frame -->
<div class="a" style="left:2.500px;top:109px;width:196.500px;height:148.600px;border:1px solid #c9c7c1;box-sizing:border-box;background:#fff;overflow:hidden;"></div>
<div class="a" style="left:3.500px;top:110px;width:183.500px;height:15.400px;background:#f1f0ef;box-sizing:border-box;"></div>
<div class="a" style="left:3.500px;top:110px;width:116.300px;height:15.400px;background:linear-gradient(#ffffff,#edecea);border-right:1px solid #cfcdc8;border-bottom:1px solid #cfcdc8;box-sizing:border-box;"></div>
<div class="t" style="left:5.500px;top:113.20px;font-size:10px;color:#3c3c3c;">Labels &amp; Attributes</div>
<div class="a" style="left:3.500px;top:125.400px;width:183.500px;height:131.400px;overflow:hidden;"><div class="a" style="left:-3.500px;top:-125.400px;width:200px;height:300px;">
<div class="t" style="left:45.600px;top:126.60px;font-size:9.550px;color:#a9a9a9;">DWire004</div>
<div class="t" style="left:45.600px;top:139.05px;font-size:9.550px;color:#a9a9a9;">DWire005</div>
<div class="t" style="left:45.600px;top:151.50px;font-size:9.550px;color:#a9a9a9;">DWire006</div>
<div class="t" style="left:45.600px;top:163.95px;font-size:9.550px;color:#3a3a3a;">Extrude</div>
<div class="t" style="left:45.600px;top:176.40px;font-size:9.550px;color:#3a3a3a;">Extrude001</div>
<div class="t" style="left:45.600px;top:188.85px;font-size:9.550px;color:#3a3a3a;">Extrude002</div>
<div class="t" style="left:45.600px;top:201.30px;font-size:9.550px;color:#a9a9a9;">DWire010</div>
<div class="t" style="left:45.600px;top:213.75px;font-size:9.550px;color:#a9a9a9;">DWire011</div>
<div class="t" style="left:45.600px;top:226.20px;font-size:9.550px;color:#a9a9a9;">DWire012</div>
<div class="t" style="left:45.600px;top:238.65px;font-size:9.550px;color:#3a3a3a;">Extrude003</div>
<div class="t" style="left:45.600px;top:251.10px;font-size:9.550px;color:#3a3a3a;">DWire014</div>
<svg width="200" height="300" viewBox="0 0 200 300" style="left:0;top:0;">
<g fill="#fff" stroke="#a2a2a2" stroke-width="0.850"><rect x="31.500" y="130.10" width="7" height="6"/><circle cx="37.600" cy="130.50" r="3.300"/><path d="M38.500 130.10v4.300h-4.200" fill="none"/><path d="M37.200 129.30l1.600 1l-1.600 1z" fill="#a2a2a2" stroke="none"/></g>
<g fill="#fff" stroke="#a2a2a2" stroke-width="0.850"><rect x="31.500" y="142.55" width="7" height="6"/><circle cx="37.600" cy="142.95" r="3.300"/><path d="M38.500 142.55v4.300h-4.200" fill="none"/><path d="M37.200 141.75l1.600 1l-1.600 1z" fill="#a2a2a2" stroke="none"/></g>
<g fill="#fff" stroke="#a2a2a2" stroke-width="0.850"><rect x="31.500" y="155.00" width="7" height="6"/><circle cx="37.600" cy="155.40" r="3.300"/><path d="M38.500 155.00v4.300h-4.200" fill="none"/><path d="M37.200 154.20l1.600 1l-1.600 1z" fill="#a2a2a2" stroke="none"/></g>
<path d="M21.900 167.25v4.400l3.800-2.200z" fill="#5e5e5e"/>
<g><path d="M31.300 170.25q0-1.600 4.800-1.600q4.800 0 4.800 1.600v2q0 1.600-4.800 1.600q-4.800 0-4.800-1.600z" fill="#6f84e2"/><ellipse cx="36.100" cy="170.25" rx="4.800" ry="1.600" fill="#98a8f0"/><path d="M32 170.35q4.100 1.800 8.200 0v1.300q-4.100 1.800-8.200 0z" fill="#2c48b4"/><path d="M31.300 172.05q0 1.600 4.800 1.600q4.800 0 4.800-1.600" fill="none" stroke="#e4e8fb" stroke-width="0.500"/><path d="M36.100 163.95l2.700 3.200h-1.500v3.400h-2.400v-3.400h-1.500z" fill="#1c3aa4" stroke="#12287c" stroke-width="0.400"/></g>
<path d="M21.900 179.70v4.400l3.800-2.200z" fill="#5e5e5e"/>
<g><path d="M31.300 182.70q0-1.600 4.800-1.600q4.800 0 4.800 1.600v2q0 1.600-4.800 1.600q-4.800 0-4.800-1.600z" fill="#6f84e2"/><ellipse cx="36.100" cy="182.70" rx="4.800" ry="1.600" fill="#98a8f0"/><path d="M32 182.80q4.100 1.800 8.200 0v1.300q-4.100 1.800-8.200 0z" fill="#2c48b4"/><path d="M31.300 184.50q0 1.600 4.800 1.600q4.800 0 4.800-1.600" fill="none" stroke="#e4e8fb" stroke-width="0.500"/><path d="M36.100 176.40l2.700 3.200h-1.500v3.400h-2.400v-3.400h-1.500z" fill="#1c3aa4" stroke="#12287c" stroke-width="0.400"/></g>
<path d="M21.900 192.15v4.400l3.800-2.200z" fill="#5e5e5e"/>
<g><path d="M31.300 195.15q0-1.600 4.800-1.600q4.800 0 4.800 1.600v2q0 1.600-4.800 1.600q-4.800 0-4.800-1.600z" fill="#6f84e2"/><ellipse cx="36.100" cy="195.15" rx="4.800" ry="1.600" fill="#98a8f0"/><path d="M32 195.25q4.100 1.800 8.200 0v1.300q-4.100 1.800-8.200 0z" fill="#2c48b4"/><path d="M31.300 196.95q0 1.600 4.800 1.600q4.800 0 4.800-1.600" fill="none" stroke="#e4e8fb" stroke-width="0.500"/><path d="M36.100 188.85l2.700 3.200h-1.500v3.400h-2.400v-3.400h-1.500z" fill="#1c3aa4" stroke="#12287c" stroke-width="0.400"/></g>
<g fill="#fff" stroke="#a2a2a2" stroke-width="0.850"><rect x="31.500" y="204.80" width="7" height="6"/><circle cx="37.600" cy="205.20" r="3.300"/><path d="M38.500 204.80v4.300h-4.200" fill="none"/><path d="M37.200 204.00l1.600 1l-1.600 1z" fill="#a2a2a2" stroke="none"/></g>
<g fill="#fff" stroke="#a2a2a2" stroke-width="0.850"><rect x="31.500" y="217.25" width="7" height="6"/><circle cx="37.600" cy="217.65" r="3.300"/><path d="M38.500 217.25v4.300h-4.200" fill="none"/><path d="M37.200 216.45l1.600 1l-1.600 1z" fill="#a2a2a2" stroke="none"/></g>
<g fill="#fff" stroke="#a2a2a2" stroke-width="0.850"><rect x="31.500" y="229.70" width="7" height="6"/><circle cx="37.600" cy="230.10" r="3.300"/><path d="M38.500 229.70v4.300h-4.200" fill="none"/><path d="M37.200 228.90l1.600 1l-1.600 1z" fill="#a2a2a2" stroke="none"/></g>
<path d="M21.900 241.95v4.400l3.800-2.200z" fill="#5e5e5e"/>
<g><path d="M31.300 244.95q0-1.600 4.800-1.600q4.800 0 4.800 1.600v2q0 1.600-4.800 1.600q-4.800 0-4.800-1.600z" fill="#6f84e2"/><ellipse cx="36.100" cy="244.95" rx="4.800" ry="1.600" fill="#98a8f0"/><path d="M32 245.05q4.100 1.800 8.200 0v1.300q-4.100 1.800-8.200 0z" fill="#2c48b4"/><path d="M31.300 246.75q0 1.600 4.800 1.600q4.800 0 4.800-1.600" fill="none" stroke="#e4e8fb" stroke-width="0.500"/><path d="M36.100 238.65l2.700 3.200h-1.500v3.400h-2.400v-3.400h-1.500z" fill="#1c3aa4" stroke="#12287c" stroke-width="0.400"/></g>
<g fill="#fff" stroke="#3030e0" stroke-width="0.850"><rect x="31.500" y="254.60" width="7" height="6"/><circle cx="37.600" cy="255.00" r="3.300"/><path d="M38.500 254.60v4.300h-4.200" fill="none"/><path d="M37.200 253.80l1.600 1l-1.600 1z" fill="#3030e0" stroke="none"/></g>
</svg></div></div>
<!-- scrollbar -->
<div class="a" style="left:189px;top:110px;width:9px;height:146.600px;background:#d9d7d3;border-radius:4.500px;border:1px solid #c4c2bc;box-sizing:border-box;"></div>
<div class="a" style="left:189px;top:110px;width:9px;height:9.500px;background:#eceae7;border-radius:4.500px 4.500px 0 0;border:1px solid #c4c2bc;box-sizing:border-box;"></div>
<div class="a" style="left:189px;top:247.200px;width:9px;height:9.400px;background:#eceae7;border-radius:0 0 4.500px 4.500px;border:1px solid #c4c2bc;box-sizing:border-box;"></div>
<div class="a" style="left:189px;top:163.600px;width:9px;height:65.200px;background:linear-gradient(90deg,#f8f7f6,#eceae7);border-radius:4px;border:1px solid #bdbbb5;box-sizing:border-box;"></div>
<svg width="12" height="150" viewBox="188 108 12 150" style="left:188px;top:108px;">
<path d="M191.900 115.600l1.600-1.800l1.600 1.800zM191.900 250.800l1.600 1.800l1.600-1.800z" fill="#5a5a58"/>
<path d="M193.500 193.500v0.600M193.500 195.500v0.600M193.500 197.500v0.600" stroke="#b4b2ac" stroke-width="1.400"/>
</svg>
<!-- splitter handle -->
<svg width="8" height="3" viewBox="96 258 8 3" style="left:96px;top:258px;"><path d="M97.500 259.300h5" stroke="#d4d2ce" stroke-width="1.200" stroke-dasharray="1 0.800"/></svg>
<!-- property frame -->
<div class="a" style="left:196.500px;top:262px;width:2.600px;height:176px;background:#e2e0dc;"></div>
<div class="a" style="left:2.500px;top:261.800px;width:194.500px;height:155.600px;border:1px solid #c9c7c1;box-sizing:border-box;background:#fff;"></div>
<div class="a" style="left:3.500px;top:262.800px;width:192.500px;height:16.800px;background:linear-gradient(#ffffff,#edecea);border-bottom:1px solid #cfcdc8;box-sizing:border-box;"></div>
<div class="a" style="left:69.400px;top:263.800px;width:1px;height:14.600px;background:#d9d7d3;"></div>
<div class="t" style="left:6.500px;top:267.80px;font-size:10.100px;color:#4a4a4a;">Property</div>
<div class="t" style="left:72.600px;top:267.80px;font-size:9.700px;color:#4a4a4a;">Value</div>
<!-- bottom tabs -->
<svg width="80" height="24" viewBox="0 416 80 24" style="left:0;top:416px;">
<path d="M35.400 418.800l4 14.600q0.600 2 2.400 2h15.800q1.800 0 2.400-2l4.300-14.600" fill="#e9e8e5" stroke="#8a8986" stroke-width="0.700"/>
<path d="M2.200 417.600l4.600 17q0.600 2.200 2.400 2.200h16.600q1.800 0 2.400-2.200l5.800-17" fill="#fdfdfd" stroke="#6c6b68" stroke-width="0.700"/>
</svg>
<div class="t" style="left:7.900px;top:420.600px;font-size:9.500px;color:#4a4a4a;">View</div>
<div class="t" style="left:39.900px;top:420.300px;font-size:9.500px;color:#4a4a4a;">Data</div>

<!-- right toolbar -->
<div class="a" style="left:781.600px;top:80.50px;width:15.800px;height:14.800px;border:1px solid #cdcbc5;border-radius:3.500px;box-sizing:border-box;background:linear-gradient(#f6f5f3,#e2e0dc);"></div>
<div class="a" style="left:781.600px;top:97.50px;width:15.800px;height:14.800px;border:1px solid #cdcbc5;border-radius:3.500px;box-sizing:border-box;background:linear-gradient(#f6f5f3,#e2e0dc);"></div>
<div class="a" style="left:781.600px;top:114.50px;width:15.800px;height:14.800px;border:1px solid #cdcbc5;border-radius:3.500px;box-sizing:border-box;background:linear-gradient(#fdfdfc,#f1f0ee);"></div>
<div class="a" style="left:781.600px;top:131.50px;width:15.800px;height:14.800px;border:1px solid #cdcbc5;border-radius:3.500px;box-sizing:border-box;background:linear-gradient(#f6f5f3,#e2e0dc);"></div>
<div class="a" style="left:781.600px;top:148.50px;width:15.800px;height:14.800px;border:1px solid #cdcbc5;border-radius:3.500px;box-sizing:border-box;background:linear-gradient(#fdfdfc,#f1f0ee);"></div>
<div class="a" style="left:781.600px;top:165.50px;width:15.800px;height:14.800px;border:1px solid #cdcbc5;border-radius:3.500px;box-sizing:border-box;background:linear-gradient(#fdfdfc,#f1f0ee);"></div>
<div class="a" style="left:781.600px;top:182.50px;width:15.800px;height:14.800px;border:1px solid #cdcbc5;border-radius:3.500px;box-sizing:border-box;background:linear-gradient(#f6f5f3,#e2e0dc);"></div>
<div class="a" style="left:781.600px;top:199.50px;width:15.800px;height:14.800px;border:1px solid #cdcbc5;border-radius:3.500px;box-sizing:border-box;background:linear-gradient(#fdfdfc,#f1f0ee);"></div>
<div class="a" style="left:781.600px;top:216.50px;width:15.800px;height:14.800px;border:1px solid #cdcbc5;border-radius:3.500px;box-sizing:border-box;background:linear-gradient(#f6f5f3,#e2e0dc);"></div>
<div class="a" style="left:781.600px;top:233.50px;width:15.800px;height:14.800px;border:1px solid #cdcbc5;border-radius:3.500px;box-sizing:border-box;background:linear-gradient(#fdfdfc,#f1f0ee);"></div>
<div class="a" style="left:781.600px;top:250.50px;width:15.800px;height:14.800px;border:1px solid #cdcbc5;border-radius:3.500px;box-sizing:border-box;background:linear-gradient(#fdfdfc,#f1f0ee);"></div>
<div class="a" style="left:781.600px;top:267.50px;width:15.800px;height:14.800px;border:1px solid #cdcbc5;border-radius:3.500px;box-sizing:border-box;background:linear-gradient(#fdfdfc,#f1f0ee);"></div>
<div class="a" style="left:781.600px;top:284.50px;width:15.800px;height:14.800px;border:1px solid #cdcbc5;border-radius:3.500px;box-sizing:border-box;background:linear-gradient(#f6f5f3,#e2e0dc);"></div>
<div class="a" style="left:781.600px;top:301.50px;width:15.800px;height:14.800px;border:1px solid #cdcbc5;border-radius:3.500px;box-sizing:border-box;background:linear-gradient(#f6f5f3,#e2e0dc);"></div>
<svg width="24" height="260" viewBox="776 70 24 260" style="left:776px;top:70px;">
<path d="M786.600 76.500h1M788.400 76.500h1M790.200 76.500h1M792 76.500h1" stroke="#cfcdc8" stroke-width="1.200"/>
<path d="M787.400 87.30v-1.800a2.100 2.100 0 0 1 4.200 0v1.800" fill="none" stroke="#07604a" stroke-width="1.500"/><rect x="786" y="87.00" width="7" height="5.200" rx="0.600" fill="#0f9474" stroke="#07604a" stroke-width="0.600"/><path d="M786.600 88.30h5.800" stroke="#7fd8c0" stroke-width="0.700"/>
<path d="M785.600 108.30l8.200-6.800" stroke="#07604a" stroke-width="2" stroke-linecap="round"/><path d="M785.600 108.30l8.200-6.800" stroke="#0f9474" stroke-width="0.900" stroke-linecap="round"/><ellipse cx="789.700" cy="104.90" rx="2.600" ry="1.800" transform="rotate(-40 789.700 104.90)" fill="#0f9474" stroke="#07604a" stroke-width="0.600"/>
<path d="M790.200 117.70v7.400M784.900 125.50h10.500" stroke="#07604a" stroke-width="2.300"/><path d="M790.200 117.90v7.400M785.300 125.50h9.700" stroke="#0f9474" stroke-width="1.100"/>
<path d="M787.900 134.60v8.600M792.300 134.60v8.600M785.800 136.70h8.600M785.800 141.10h8.600" stroke="#07604a" stroke-width="2.200"/><path d="M787.900 134.90v8M792.300 134.90v8M786.100 136.70h8M786.100 141.10h8" stroke="#0f9474" stroke-width="1"/>
<path d="M786.200 152.50l7.400 6.800M793.600 152.50l-7.400 6.800" stroke="#07604a" stroke-width="2.600" stroke-linecap="round"/><path d="M786.200 152.50l7.400 6.800M793.600 152.50l-7.400 6.800" stroke="#0f9474" stroke-width="1.300" stroke-linecap="round"/>
<path d="M785.600 169.50l8.600 3.600M785.300 172.70l8 3.600" stroke="#07604a" stroke-width="2.100" stroke-linecap="round"/><path d="M785.600 169.50l8.600 3.600M785.300 172.70l8 3.600" stroke="#0f9474" stroke-width="0.900" stroke-linecap="round"/>
<path d="M786.600 192.70l7-5.800" stroke="#07604a" stroke-width="2.100" stroke-linecap="round"/><path d="M786.600 192.70l7-5.800" stroke="#0f9474" stroke-width="0.900" stroke-linecap="round"/><circle cx="786.900" cy="192.70" r="1.900" fill="#0f9474" stroke="#07604a" stroke-width="0.600"/>
<path d="M789.700 202.10l2.200 2.600h-4.400zM789.700 211.70l2.200-2.600h-4.400zM784.900 206.90l2.600-2.200v4.400zM794.500 206.90l-2.600-2.200v4.400z" fill="#0f9474" stroke="#07604a" stroke-width="0.700" stroke-linejoin="round"/>
<circle cx="789.500" cy="223.90" r="3.600" fill="#e8f4f0" stroke="#07604a" stroke-width="2.300"/><circle cx="789.500" cy="223.90" r="3.600" fill="none" stroke="#0f9474" stroke-width="1.300"/><circle cx="789.500" cy="223.90" r="1" fill="#07604a"/>
<g fill="#0f9474" stroke="#07604a" stroke-width="0.400"><circle cx="786" cy="241.50" r="1.300"/><circle cx="789.700" cy="241.50" r="1.300"/><circle cx="793.400" cy="241.50" r="1.300"/></g>
<path d="M785.600 257.70l7.200 4.200" stroke="#07604a" stroke-width="2.300" stroke-linecap="round"/><path d="M785.600 257.70l7.200 4.200" stroke="#0f9474" stroke-width="1" stroke-linecap="round"/><circle cx="791.600" cy="255.30" r="1.400" fill="#0f9474" stroke="#07604a" stroke-width="0.400"/>
<path d="M789.700 271.40v7M786.200 274.90h7" stroke="#07604a" stroke-width="2.500"/><path d="M789.700 271.70v6.400M786.500 274.90h6.400" stroke="#0f9474" stroke-width="1.200"/>
<path d="M786.200 294.10v-3.200h2.600M787.200 292.30l2.400-2.400M790.600 288.90h2.600v3" fill="none" stroke="#07604a" stroke-width="1.300"/><path d="M785.600 294.10h2.200v1.800h-2.200zM791.800 292.30l2.600 0l-1.300 1.800z" fill="#0f9474"/>
<rect x="785.800" y="304.90" width="8" height="8" fill="#12b48c" stroke="#07604a" stroke-width="0.900"/><circle cx="788.400" cy="309.50" r="1" fill="none" stroke="#07604a" stroke-width="0.600"/>
</svg>
<div class="a" style="left:799px;top:137px;width:1px;height:21px;background:linear-gradient(#c8b040 0,#707070 2px,#6a6a6a 21px);opacity:0.85;"></div>
<div class="a" style="left:799px;top:236px;width:1px;height:15px;background:linear-gradient(#4a62a0 0,#4a62a0 6px,#5a5a5a 8px,#5a5a5a 15px);opacity:0.85;"></div>

<!-- bottom -->
<div class="a" style="left:203px;top:417px;width:141px;height:21.400px;border:1px solid #cfcdc8;border-top:none;border-radius:0 0 3.500px 3.500px;box-sizing:border-box;background:#f7f6f5;"></div>
<div class="a" style="left:0;top:437.600px;width:800px;height:1px;background:#dddbd7;"></div>
<svg width="140" height="22" viewBox="204 417 140 22" style="left:204px;top:417px;">
<path d="M208.300 422.800h4.200l1.400 1.400v4.200l-2 3.400h-3.600z" fill="#e02818" stroke="#a01408" stroke-width="0.400"/>
<path d="M210 424.600h2.400" stroke="#fff" stroke-width="0.700"/>
<circle cx="214.300" cy="428.200" r="3.100" fill="#1e3ea8" stroke="#122878" stroke-width="0.800" stroke-dasharray="1.300 0.900"/>
<circle cx="214.300" cy="428.200" r="2.400" fill="#2448b8"/>
<circle cx="214.300" cy="428.200" r="0.900" fill="#f4f4ff"/>
<path d="M329 424.800l6.800 6.800M335.800 424.800l-6.800 6.800" stroke="#626260" stroke-width="2.100"/>
</svg>
<div class="t" style="left:223.400px;top:422.400px;font-size:9.550px;color:#3c3c3c;">F2-T17-ejemplo-ini : 1*</div>
<div class="t" style="left:2.100px;top:442.900px;font-size:9.500px;color:#2a2a2a;">DWire has been closed</div>
<div class="t" style="left:702px;top:442.900px;font-size:9.460px;color:#4a4a4a;">160.56 x 96.08 mm</div>
<!-- axis indicator -->
<svg width="30" height="24" viewBox="756 384 30 24" style="left:756px;top:384px;">
<path d="M762.400 399.300l12.300 1.800" stroke="#a82828" stroke-width="1.300"/>
<path d="M769.600 399.700l5.200 1.400l-5.400 0.400z" fill="#a82828"/>
<path d="M762.400 399.300l4-5.600" stroke="#1c9a1c" stroke-width="1.500"/>
<path d="M762.400 399.300l-2.200-10.800" stroke="#1c1c9c" stroke-width="1.400"/>
<path d="M760 388.200l1.700 4.400l-2.700 0.500z" fill="#1c1c9c"/>
<text x="767.400" y="393.900" font-family="Liberation Sans, sans-serif" font-size="6.400" fill="#1a1a1a" stroke="#1a1a1a" stroke-width="0.250">Y</text>
<text x="775.700" y="401.700" font-family="Liberation Sans, sans-serif" font-size="6.400" fill="#1a1a1a" stroke="#1a1a1a" stroke-width="0.250">X</text>
</svg>

</body></html>
